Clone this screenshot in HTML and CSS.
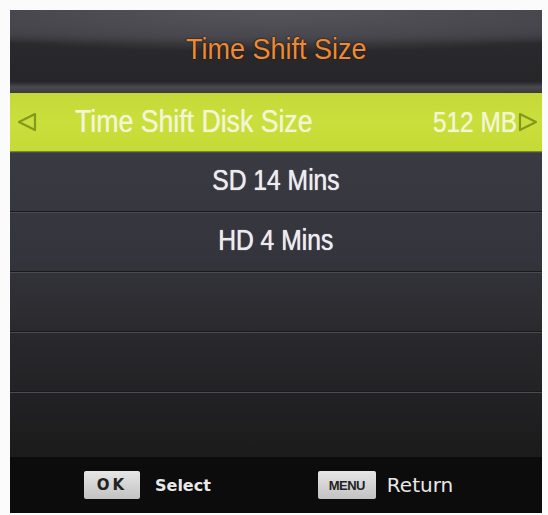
FILE: index.html
```html
<!DOCTYPE html>
<html>
<head>
<meta charset="utf-8">
<link rel="stylesheet" href="styles.css">
</head>
<body>
<div class="panel">
  <div class="titlebar"><span class="title">Time Shift Size</span></div>
  <div class="row sel">
    <svg class="arrow" width="22" height="20" viewBox="0 0 22 20"><path d="M19 2 L3 10 L19 18 Z" fill="none" stroke="#84981e" stroke-width="2.2" stroke-linejoin="round"/></svg>
    <span class="label">Time Shift Disk Size</span>
    <span class="value">512 MB</span>
    <svg class="arrow" width="22" height="20" viewBox="0 0 22 20"><path d="M3 2 L19 10 L3 18 Z" fill="none" stroke="#84981e" stroke-width="2.2" stroke-linejoin="round"/></svg>
  </div>
  <div class="list">
    <div class="row"><span class="text">SD 14 Mins</span></div>
    <div class="row"><span class="text">HD 4 Mins</span></div>
    <div class="row"></div>
    <div class="row"></div>
    <div class="row last"></div>
  </div>
  <div class="footer">
    <span class="key ok">OK</span><span class="hint small">Select</span>
    <span class="key menu">MENU</span><span class="hint">Return</span>
  </div>
</div>
</body>
</html>
```
FILE: styles.css
```css
html, body { margin: 0; padding: 0; }
body {
  background: #fbfbfb;
  padding: 10px 0 0 10px;
  width: 548px;
  height: 515px;
  box-sizing: border-box;
  font-family: "Liberation Sans", Arial, sans-serif;
}
.panel {
  width: 532px;
  height: 503px;
  display: flex;
  flex-direction: column;
  background: #111;
  box-shadow: inset 1px 0 0 #5a5a60, inset -1px 0 0 #5a5a60;
}
.titlebar {
  height: 83px;
  display: flex;
  align-items: center;
  justify-content: center;
  background:
    radial-gradient(ellipse 420px 40px at 50% 2px, #55555b 0%, #48484e 60%, rgba(60,60,66,0) 100%),
    linear-gradient(to bottom, #47474d 0%, #3c3c42 30%, #2a2a2e 40%, #262629 86%, #4a4a4f 93%, #3a3a3e 100%);
  padding-bottom: 6px;
  box-sizing: border-box;
}
.title {
  display: inline-block;
  color: #ea8b3c;
  font-size: 30px;
  transform: scaleX(0.9);
  text-shadow: 0 0 2px #3a1a00, 0 0 1px #000;
}
.row {
  height: 60px;
  display: flex;
  align-items: center;
  justify-content: center;
  box-sizing: border-box;
  border-bottom: 1px solid #1a1a1e;
  box-shadow: inset 0 1px 0 #4a4a52;
}
.row.sel {
  height: 59px;
  background: linear-gradient(to bottom, #c4d838 0%, #cbdf3c 50%, #c6da36 100%);
  justify-content: flex-start;
  padding: 0 3px 0 6px;
  box-shadow: none;
  border-bottom: 1px solid #7a8a20;
}
.sel .label {
  display: inline-block;
  color: #f2f6d4;
  font-size: 31px;
  margin-left: 37px;
  flex: 1;
  transform: scaleX(0.86);
  transform-origin: left center;
  text-shadow: 0 0 1px #e8f0b0;
  white-space: nowrap;
}
.sel .value {
  display: inline-block;
  color: #f2f6d4;
  font-size: 29px;
  transform: scaleX(0.84);
  transform-origin: right center;
  text-shadow: 0 0 1px #e8f0b0;
}
.arrow { flex: none; }
.list {
  flex: 1;
  display: flex;
  flex-direction: column;
  background: linear-gradient(to bottom, #3a3a42 0%, #34343c 35%, #29292d 60%, #202022 85%, #1b1b1b 100%);
}
.list .row { height: 60px; }
.text {
  display: inline-block;
  color: #ececf0;
  font-size: 29px;
  transform: scaleX(0.85);
  text-shadow: 0 0 1px #fff;
  padding-bottom: 2px;
}
.footer {
  height: 56px;
  flex: none;
  background: #0c0c0c;
  display: flex;
  align-items: center;
  padding-left: 74px;
  box-sizing: border-box;
}
.key {
  display: inline-flex;
  align-items: center;
  justify-content: center;
  height: 28px;
  background: linear-gradient(to bottom, #e6e6e6, #c2c2c2);
  border-radius: 2px;
  color: #222;
  font-family: "DejaVu Sans", sans-serif;
  font-weight: bold;
}
.key.ok {
  width: 56px;
  font-size: 15px;
  letter-spacing: 3px;
}
.key.menu {
  width: 58px;
  margin-left: 107px;
  font-size: 13px;
  font-family: "Liberation Sans Narrow", "Liberation Sans", sans-serif;
  letter-spacing: -0.5px;
}
.hint {
  color: #e8e8e8;
  font-family: "DejaVu Sans", sans-serif;
  font-size: 20px;
  margin-left: 11px;
}
.hint.small {
  font-size: 16px;
  font-weight: bold;
  margin-left: 15px;
}
```
